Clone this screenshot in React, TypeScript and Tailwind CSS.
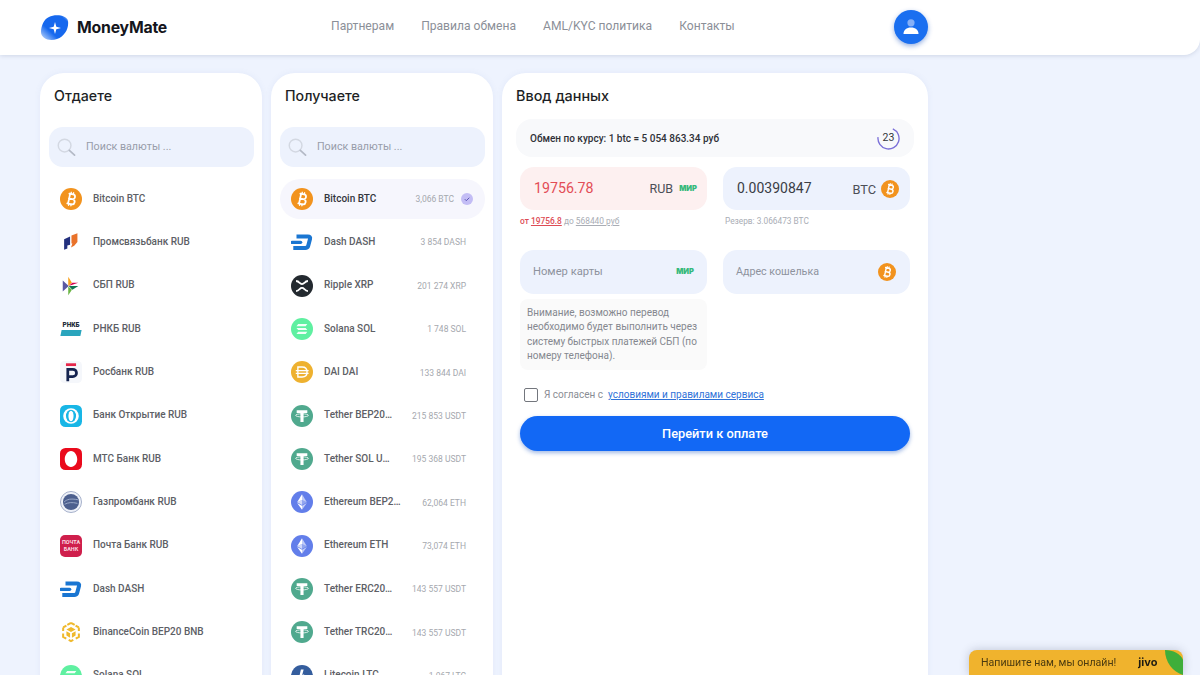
import type { ReactNode } from "react";

const sans = "font-['Roboto',sans-serif]";

function Svg({ children }: { children: ReactNode }) {
  return (
    <svg viewBox="0 0 24 24" className="size-[22px] shrink-0">
      {children}
    </svg>
  );
}

function BtcGlyph({ size = 22 }: { size?: number }) {
  return (
    <svg viewBox="0 0 24 24" width={size} height={size} className="shrink-0">
      <circle cx="12" cy="12" r="12" fill="#f2931e" />
      <g transform="rotate(12 12 12)" fill="none" stroke="#fff" strokeLinecap="round">
        <path
          d="M9 6.600h4.200a2.600 2.600 0 0 1 0 5.300H9.600m0 0h4.200a2.800 2.800 0 0 1 0 5.600H9M9.900 6.600v10.900"
          strokeWidth="1.900"
        />
        <path d="M10.800 4.800v1.600M13.400 4.800v1.600M10.800 17.600v1.600M13.400 17.600v1.600" strokeWidth="1.500" />
      </g>
    </svg>
  );
}

function DashIcon() {
  return (
    <Svg>
      <path
        d="M6 6h12.500c1.800 0 2.700 1 2.300 2.500l-2 7.500c-.4 1.500-1.500 2.500-3.300 2.500H2.500"
        fill="none"
        stroke="#1a76d2"
        strokeWidth="4.400"
      />
      <path d="M1.200 12.300h9.300" stroke="#1a76d2" strokeWidth="3.600" strokeLinecap="round" />
    </Svg>
  );
}

function XrpIcon() {
  return (
    <Svg>
      <circle cx="12" cy="12" r="12" fill="#23292f" />
      <path
        d="M5.500 6.500c2 0 3 1 4 2.200 1.400 1.600 3.600 1.600 5 0 1-1.200 2-2.200 4-2.200M5.500 17.500c2 0 3-1 4-2.200 1.400-1.600 3.600-1.600 5 0 1 1.200 2 2.200 4 2.200"
        fill="none"
        stroke="#fff"
        strokeWidth="2"
      />
    </Svg>
  );
}

function SolIcon() {
  return (
    <Svg>
      <circle cx="12" cy="12" r="12" fill="#5ff0a1" />
      <path d="M7.800 6.500h10l-1.800 2.400H6zM6 10.800h10l1.800 2.400h-10zM7.800 15.100h10l-1.800 2.400H6z" fill="#f2fff8" />
    </Svg>
  );
}

function DaiIcon() {
  return (
    <Svg>
      <circle cx="12" cy="12" r="12" fill="#eeb12f" />
      <path
        d="M7.500 6.500h4.700c3.200 0 5.300 2.300 5.300 5.500s-2.100 5.500-5.300 5.500H7.500z"
        fill="none"
        stroke="#fff"
        strokeWidth="1.500"
      />
      <path d="M5.200 10.400h14M5.200 13.600h14" stroke="#fff" strokeWidth="1.400" />
    </Svg>
  );
}

function TetherIcon() {
  return (
    <Svg>
      <circle cx="12" cy="12" r="12" fill="#50a98e" />
      <path d="M6.200 5.800h11.600v3h-4.100v9.700h-3.400V8.800H6.200z" fill="#fff" />
      <ellipse cx="12" cy="11.300" rx="7" ry="1.700" fill="none" stroke="#fff" strokeWidth="1" opacity=".85" />
    </Svg>
  );
}

function EthIcon() {
  return (
    <Svg>
      <circle cx="12" cy="12" r="12" fill="#627eea" />
      <path d="M12 3.500v6.400l5.300 2.400z" fill="#fff" opacity=".6" />
      <path d="M12 3.500L6.700 12.300 12 9.900z" fill="#fff" />
      <path d="M12 16.200v4.300l5.300-7.400z" fill="#fff" opacity=".6" />
      <path d="M12 16.200v4.300l-5.300-7.400z" fill="#fff" />
      <path d="M12 15.200l5.300-2.900L12 9.900z" fill="#fff" opacity=".3" />
      <path d="M6.700 12.300l5.300 2.900V9.900z" fill="#fff" opacity=".7" />
    </Svg>
  );
}

function LtcIcon() {
  return (
    <Svg>
      <circle cx="12" cy="12" r="12" fill="#345d9d" />
      <path d="M10.800 5h3l-1.600 6 2.200-.8-.5 1.800-2.200.8-.9 3.400h6l-.6 2.300H7.400l1.300-4.800-1.700.6.5-1.700 1.700-.6z" fill="#fff" />
    </Svg>
  );
}

function PsbIcon() {
  return (
    <Svg>
      <path d="M4.500 9l6.500-3v9l-3 .8v3.200l-3.500 1.500z" fill="#23307e" />
      <path d="M12.500 5l6.500-2.500v9.500l-3.500 4-3.500 2 1.500-4.500h-1z" fill="#e9722a" />
    </Svg>
  );
}

function SbpIcon() {
  return (
    <Svg>
      <path d="M3 6l6.500 6L3 18z" fill="#5b57a2" />
      <path d="M9 2l4 6.500L9 12z" fill="#f9a01b" />
      <path d="M9.500 12l4-3.500H20z" fill="#d90751" />
      <path d="M9.500 12H20l-6.500 4z" fill="#0f754e" />
      <path d="M9 12.500l4 3.500-4 6z" fill="#6ab544" />
    </Svg>
  );
}

function RnkbIcon() {
  return (
    <div className="flex w-[22px] shrink-0 flex-col items-center">
      <span className="text-[6.500px] leading-[7px] font-black text-[#1d2b3a]">РНКБ</span>
      <span className="mt-[1px] h-[6px] w-[20px] -skew-x-12 bg-[#2aa5bd]" />
    </div>
  );
}

function RosbankIcon() {
  return (
    <Svg>
      <rect width="24" height="24" rx="5" fill="#f5f7fb" />
      <rect x="6.500" y="2.500" width="11" height="3" fill="#e5264a" />
      <path d="M8.500 22V9h5.500a3.700 3.700 0 0 1 0 8h-5.500" fill="none" stroke="#14234f" strokeWidth="3" />
    </Svg>
  );
}

function OpenIcon() {
  return (
    <Svg>
      <rect width="24" height="24" rx="6" fill="#18b6e6" />
      <circle cx="12" cy="12" r="8.500" fill="#fff" />
      <ellipse cx="12" cy="12" rx="5.500" ry="6.800" fill="#18b6e6" />
      <ellipse cx="12" cy="12" rx="2.800" ry="5.800" fill="#fff" />
      <rect x="9.800" y="11" width="4.400" height="2" fill="#fff" />
    </Svg>
  );
}

function MtsIcon() {
  return (
    <Svg>
      <rect width="24" height="24" rx="6" fill="#ea0a1c" />
      <path d="M12 3.200c4 0 6.800 4.600 6.800 9.200 0 4.500-3 8.400-6.800 8.400s-6.800-3.900-6.800-8.400c0-4.600 2.800-9.200 6.800-9.200z" fill="#fff" />
    </Svg>
  );
}

function GazpromIcon() {
  return (
    <Svg>
      <circle cx="12" cy="12" r="11.500" fill="#eef1f8" stroke="#8b98bb" strokeWidth="0.800" />
      <circle cx="12" cy="12" r="8.800" fill="#4c5f8e" />
      <path d="M4.500 12c3-3 7-4 15-2.500M5 14.500c4-2 8-2.500 14-1" fill="none" stroke="#9fadcc" strokeWidth="1" />
    </Svg>
  );
}

function PochtaIcon() {
  return (
    <div className="flex size-[22px] shrink-0 flex-col items-center justify-center rounded-[5px] bg-[#cf1f4c] text-[5.500px] leading-[6.500px] font-bold text-[#fbdbe3]">
      <span>ПОЧТА</span>
      <span>БАНК</span>
    </div>
  );
}

function BnbIcon() {
  return (
    <Svg>
      <path
        d="M12 2l4 2.300M12 2L8 4.300M20.500 7l.1 4M20.500 7l-3.500-2M3.500 7l3.500-2M3.500 7l-.1 4M3.400 13.500v3.800l3.400 2M20.600 13.500v3.800l-3.400 2M9.500 20.700L12 22l2.500-1.300"
        fill="none"
        stroke="#efb92d"
        strokeWidth="2.200"
      />
      <path d="M12 6.500l5 2.800-5 2.700-5-2.700zM7 11.200l4 2.200v4.800l-4-2.300zM17 11.200l-4 2.200v4.800l4-2.300z" fill="#efb92d" />
    </Svg>
  );
}

function SearchIcon() {
  return (
    <svg viewBox="0 0 20 20" className="size-[19px] shrink-0" fill="none">
      <circle cx="8" cy="8" r="6.700" stroke="#d3d8e2" strokeWidth="1.500" />
      <path d="M13 13l5.500 5" stroke="#b4bac6" strokeWidth="1.800" strokeLinecap="round" />
    </svg>
  );
}

function MirMark({ className = "" }: { className?: string }) {
  return (
    <span className={`font-['Inter',sans-serif] text-[7.500px] leading-none font-black text-[#35b97b] ${className}`}>
      МИР
    </span>
  );
}

const gives: { name: string; icon: ReactNode }[] = [
  { name: "Bitcoin BTC", icon: <BtcGlyph /> },
  { name: "Промсвязьбанк RUB", icon: <PsbIcon /> },
  { name: "СБП RUB", icon: <SbpIcon /> },
  { name: "РНКБ RUB", icon: <RnkbIcon /> },
  { name: "Росбанк RUB", icon: <RosbankIcon /> },
  { name: "Банк Открытие RUB", icon: <OpenIcon /> },
  { name: "МТС Банк RUB", icon: <MtsIcon /> },
  { name: "Газпромбанк RUB", icon: <GazpromIcon /> },
  { name: "Почта Банк RUB", icon: <PochtaIcon /> },
  { name: "Dash DASH", icon: <DashIcon /> },
  { name: "BinanceCoin BEP20 BNB", icon: <BnbIcon /> },
  { name: "Solana SOL", icon: <SolIcon /> },
];

const gets: { name: string; amount: string; icon: ReactNode; active?: boolean }[] = [
  { name: "Bitcoin BTC", amount: "3,066 BTC", icon: <BtcGlyph />, active: true },
  { name: "Dash DASH", amount: "3 854 DASH", icon: <DashIcon /> },
  { name: "Ripple XRP", amount: "201 274 XRP", icon: <XrpIcon /> },
  { name: "Solana SOL", amount: "1 748 SOL", icon: <SolIcon /> },
  { name: "DAI DAI", amount: "133 844 DAI", icon: <DaiIcon /> },
  { name: "Tether BEP20…", amount: "215 853 USDT", icon: <TetherIcon /> },
  { name: "Tether SOL U…", amount: "195 368 USDT", icon: <TetherIcon /> },
  { name: "Ethereum BEP2…", amount: "62,064 ETH", icon: <EthIcon /> },
  { name: "Ethereum ETH", amount: "73,074 ETH", icon: <EthIcon /> },
  { name: "Tether ERC20…", amount: "143 557 USDT", icon: <TetherIcon /> },
  { name: "Tether TRC20…", amount: "143 557 USDT", icon: <TetherIcon /> },
  { name: "Litecoin LTC", amount: "1 067 LTC", icon: <LtcIcon /> },
];

function Row({ name, icon, amount, active }: { name: string; icon: ReactNode; amount?: string; active?: boolean }) {
  return (
    <div
      className={`mb-[3.35px] flex h-10 shrink-0 items-center gap-[11px] rounded-[20px] pl-[11px] ${
        active ? "bg-[#f6f6fd] pr-3" : "pr-[19px]"
      }`}
    >
      {icon}
      <span className={`mb-[2px] text-[10px] font-medium ${active ? "text-[#33353c]" : "text-[#5d6066]"}`}>{name}</span>
      {amount && <span className="mt-[1px] ml-auto text-[8.500px] text-[#a5a8ae]">{amount}</span>}
      {active && (
        <span className="-ml-[4px] flex size-3 items-center justify-center rounded-full bg-[#c3bdf5]">
          <svg viewBox="0 0 12 12" className="size-3" fill="none">
            <path d="M3.800 6.200l1.500 1.500 3-3" stroke="#5d55b8" strokeWidth="1" />
          </svg>
        </span>
      )}
    </div>
  );
}

function ListCard({ title, children }: { title: string; children: ReactNode }) {
  return (
    <section className="flex h-[640px] w-[222px] flex-col rounded-t-[24px] bg-white pr-2 pl-[9px] shadow-[0_0_6px_rgba(90,120,190,0.08)]">
      <h2 className="mt-3 ml-[5px] h-[42px] font-['Inter',sans-serif] text-[14.200px] leading-[21px] font-medium text-[#1d1f25]">
        {title}
      </h2>
      <div className="flex h-10 shrink-0 items-center gap-[10px] rounded-[14px] bg-[#edf2fd] pl-2">
        <SearchIcon />
        <span className="text-[10.700px] text-[#989daa]">Поиск валюты ...</span>
      </div>
      <div className="mt-3 flex flex-col">{children}</div>
    </section>
  );
}

export default function App() {
  return (
    <div className={`h-[675px] w-[1200px] overflow-hidden bg-[#eef3fe] ${sans}`}>
      {/* Header */}
      <header className="flex h-[55px] items-center rounded-br-[16px] bg-white pl-10 shadow-[0_1px_4px_rgba(70,90,130,0.18)]">
        <div className="flex w-[888px] items-center">
          <div className="flex items-center gap-[8px]">
            <svg viewBox="0 0 29 26" className="h-[26px] w-[29px]">
              <defs>
                <linearGradient id="logo" x1="0" y1="1" x2="1" y2="0">
                  <stop offset="0" stopColor="#cfe2fd" />
                  <stop offset="0.35" stopColor="#1668ee" />
                  <stop offset="0.85" stopColor="#1668ee" />
                  <stop offset="1" stopColor="#a9cbfa" />
                </linearGradient>
              </defs>
              <path d="M9 2c6-3 18-2 19 4 1 7-3 15-11 18-8 3-16-1-16-7C1 11 4 4 9 2z" fill="url(#logo)" />
              <path d="M15 7l1.300 4.700 4.700 1.300-4.700 1.300L15 19l-1.300-4.700L9 13l4.700-1.300z" fill="#fff" />
            </svg>
            <span className="font-['Inter',sans-serif] text-[15.800px] font-bold tracking-[-0.2px] text-[#14161c]">MoneyMate</span>
          </div>
          <nav className="mb-[3px] ml-[164px] flex gap-[27px] text-[12.100px] text-[#8b8f98]">
            <a>Партнерам</a>
            <a>Правила обмена</a>
            <a>AML/KYC политика</a>
            <a>Контакты</a>
          </nav>
          <button className="mb-[1px] ml-auto flex size-[34px] items-center justify-center rounded-full bg-[#1a6ff0] shadow-[0_2px_5px_rgba(20,80,190,0.45)]">
            <svg viewBox="0 0 18 18" className="size-[18px]">
              <circle cx="9" cy="4.800" r="3.600" fill="#86b0f7" />
              <path d="M1.500 16c0-4 3-6.500 7.500-6.500s7.500 2.500 7.500 6.500z" fill="#fff" />
            </svg>
          </button>
        </div>
      </header>

      <main className="mt-[18px] ml-10 flex gap-[9px]">
        <ListCard title="Отдаете">
          {gives.map((g) => (
            <Row key={g.name} name={g.name} icon={g.icon} />
          ))}
        </ListCard>

        <ListCard title="Получаете">
          {gets.map((g) => (
            <Row key={g.name + g.amount} name={g.name} icon={g.icon} amount={g.amount} active={g.active} />
          ))}
        </ListCard>

        {/* Form */}
        <section className="h-[640px] w-[426px] rounded-t-[24px] bg-white px-[14px] shadow-[0_0_6px_rgba(90,120,190,0.08)]">
          <h2 className="h-[46px] pt-3 font-['Inter',sans-serif] text-[14.400px] leading-[21px] font-medium text-[#1d1f25]">
            Ввод данных
          </h2>
          <div className="flex h-[38px] items-center justify-between rounded-[16px] bg-[#f8f9fb] px-[14px]">
            <span className="text-[10px] font-medium text-[#2f3138]">Обмен по курсу: 1 btc = 5 054 863.34 руб</span>
            <span className="relative flex size-[23px] items-center justify-center text-[10.500px] text-[#33353c]">
              <svg viewBox="0 0 24 24" className="absolute inset-0 size-[23px]" fill="none">
                <path d="M16.500 1.900A11 11 0 1 1 1.100 10.500" stroke="#7a6fd8" strokeWidth="1.400" />
              </svg>
              23
            </span>
          </div>

          <div className="mt-[10px] grid grid-cols-[187px_187px] gap-x-4 px-1">
            <div>
              <div className="flex h-[43px] items-center rounded-[14px] bg-[#fdf0f0] pr-[10px] pl-[14px]">
                <span className="text-[14.200px] text-[#e34d56]">19756.78</span>
                <span className="mt-[2px] mr-[6px] ml-auto text-[12.500px] text-[#4c4f57]">RUB</span>
                <MirMark />
              </div>
              <p className="mt-[6px] text-[8.400px] leading-[10px] text-[#a9adb5]">
                <span className="font-medium text-[#dd4c55]">
                  от <span className="underline">19756.8</span>
                </span>{" "}
                до <span className="underline">568440 руб</span>
              </p>
            </div>
            <div>
              <div className="flex h-[43px] items-center rounded-[14px] bg-[#edf2fd] pr-[11px] pl-[14px]">
                <span className="text-[14px] text-[#3a3d46]">0.00390847</span>
                <span className="mt-[2px] mr-[5px] ml-auto text-[12.800px] text-[#4c4f57]">BTC</span>
                <BtcGlyph size={18} />
              </div>
              <p className="mt-[6px] ml-[2px] text-[8.300px] leading-[10px] text-[#a9adb5]">Резерв: 3.066473 BTC</p>
            </div>

            <div className="mt-[24px]">
              <div className="flex h-[44px] items-center justify-between rounded-[14px] bg-[#edf2fd] px-[13px] text-[11.200px] text-[#8d929d]">
                Номер карты
                <MirMark className="text-[#2fae74]" />
              </div>
              <div className="mt-[5px] h-[71px] rounded-[8px] bg-[#fafafa] px-[7px] pt-[7px] text-[10px] leading-[14.400px] text-[#85888f]">
                Внимание, возможно перевод необходимо будет выполнить через систему быстрых платежей СБП (по номеру телефона).
              </div>
            </div>
            <div className="mt-[24px]">
              <div className="flex h-[44px] items-center justify-between rounded-[14px] bg-[#edf2fd] pr-[14px] pl-[13px] text-[10.700px] text-[#8d929d]">
                Адрес кошелька
                <BtcGlyph size={18} />
              </div>
            </div>
          </div>

          <label className="mt-[17px] ml-[8px] flex items-center text-[10px] text-[#8a8d94]">
            <span className="size-[14px] rounded-[2px] border border-[#73767d] bg-white" />
            <span className="ml-[6px]">Я согласен с</span>
            <a className="ml-[5px] text-[#2f72d8] underline">условиями и правилами сервиса</a>
          </label>

          <button className="mt-[14px] ml-1 h-[35px] w-[390px] rounded-full bg-[#1268f5] text-[12.800px] font-medium text-white shadow-[0_2px_4px_rgba(20,80,190,0.4)]">
            Перейти к оплате
          </button>
        </section>
      </main>

      {/* Chat widget */}
      <div className="fixed top-[650px] left-[969px] flex h-[25px] w-[214px] items-center overflow-hidden rounded-t-[8px] bg-[#f0b32d] pl-3 text-[10.600px] text-[#4a3a10] shadow-[0_0_10px_rgba(50,60,90,0.25)]">
        Напишите нам, мы онлайн!
        <span className="ml-[22px] font-['Inter',sans-serif] text-[11px] font-bold text-[#1c1a12]">jivo</span>
        <svg viewBox="0 0 18 25" className="absolute top-0 right-0 h-[25px] w-[18px]">
          <path d="M0 0c0 12 8 22 18 25V10C16 4 8 0 0 0z" fill="#3fae3a" />
        </svg>
      </div>
    </div>
  );
}
